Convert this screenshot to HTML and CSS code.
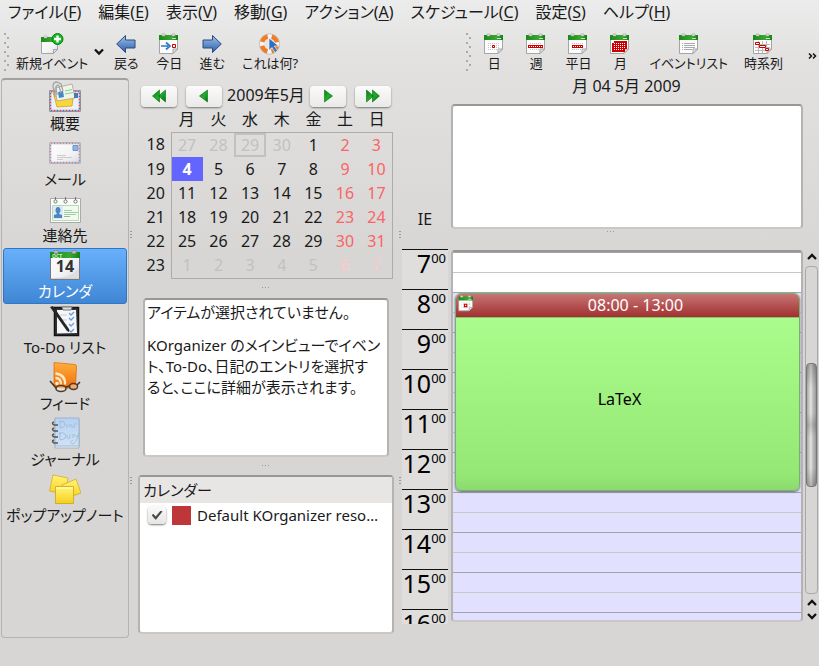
FILE: index.html
```html
<!DOCTYPE html>
<html lang="ja">
<head>
<meta charset="utf-8">
<title>Kontact</title>
<link rel="stylesheet" href="styles.css">
</head>
<body>
<svg class="defs" aria-hidden="true">
  <defs>
    <linearGradient id="green" x1="0" x2="1"><stop offset="0" stop-color="#178a17"/><stop offset=".65" stop-color="#3aa832"/><stop offset="1" stop-color="#128212"/></linearGradient>
    <linearGradient id="blue" x1="0" y1="0" x2="0" y2="1"><stop offset="0" stop-color="#9dc3ec"/><stop offset="1" stop-color="#2c5ea8"/></linearGradient>
    <linearGradient id="arrowgreen" x1="0" y1="0" x2="1" y2="1"><stop offset="0" stop-color="#0a7d14"/><stop offset=".5" stop-color="#1fb02a"/><stop offset="1" stop-color="#067010"/></linearGradient>
    <linearGradient id="orange" x1="0" y1="0" x2="0" y2="1"><stop offset="0" stop-color="#ffae3d"/><stop offset="1" stop-color="#ef6d08"/></linearGradient>
    <linearGradient id="paper" x1="0" y1="0" x2="1" y2="1"><stop offset="0" stop-color="#fff"/><stop offset=".6" stop-color="#f3f3f5"/><stop offset="1" stop-color="#d8dbe2"/></linearGradient>
    <linearGradient id="note" x1="0" y1="0" x2="0" y2="1"><stop offset="0" stop-color="#fff078"/><stop offset=".3" stop-color="#ffea5a"/><stop offset="1" stop-color="#f5cf20"/></linearGradient>
    <linearGradient id="book" x1="0" y1="0" x2="0" y2="1"><stop offset="0" stop-color="#b5d2f2"/><stop offset="1" stop-color="#cfe2f6"/></linearGradient>
    <pattern id="dots" width="2" height="2" patternUnits="userSpaceOnUse"><rect width="1" height="1" fill="#c4c4c4"/></pattern>
    <pattern id="whitedots" width="2" height="2" patternUnits="userSpaceOnUse"><rect width="1" height="1" fill="#fff"/></pattern>
    <symbol id="cal" viewBox="0 0 20 22">
      <path d="M.5 4.500V20.500H14L18.500 16V4.500z" fill="#fcfcfc" stroke="#a5a5a5"/>
      <path d="M14 20.500v-4.500h4.500z" fill="#e4e4e4" stroke="#a5a5a5"/>
      <path d="M0 2h19v5H0z" fill="url(#green)"/><path d="M13 5h4v1h-4z" fill="#c4e8bd"/>
      <path d="M3 1h3v2H3zM13 1h3v2h-3z" fill="#eee" stroke="#999" stroke-width=".6"/>
    </symbol>
  </defs>
</svg>

<nav class="menubar">
  <button>ファイル(<u>F</u>)</button>
  <button>編集(<u>E</u>)</button>
  <button>表示(<u>V</u>)</button>
  <button>移動(<u>G</u>)</button>
  <button>アクション(<u>A</u>)</button>
  <button>スケジュール(<u>C</u>)</button>
  <button>設定(<u>S</u>)</button>
  <button>ヘルプ(<u>H</u>)</button>
</nav>

<div class="toolbars">
  <div class="toolbar">
    <span class="handle"></span>
    <button class="tool"><svg viewBox="0 0 24 22" width="24" height="22"><path d="M1.500 6.500v14h12l4-4v-10z" fill="url(#paper)" stroke="#a5a5a5"/><path d="M13.500 20.500v-4h4z" fill="#ddd" stroke="#a5a5a5"/><path d="M1 4h17v5H1z" fill="url(#green)"/><path d="M4 3h3v2H4z" fill="#eee" stroke="#999" stroke-width=".5"/><circle cx="17.500" cy="6" r="5.500" fill="#18b524" stroke="#078311"/><path d="M17.500 2.500v7M14 6h7" stroke="#fff" stroke-width="2.400"/></svg><span>新規イベント</span></button>
    <button class="drop" aria-label="新規"><svg viewBox="0 0 10 8" width="10" height="8"><path d="M1 1.500l4 4 4-4" fill="none" stroke="#111" stroke-width="2.300"/></svg></button>
    <button class="tool"><svg viewBox="0 0 20 22" width="20" height="22"><path d="M.7 11L9.500 2.500v4.500h9.500v8H9.500v4.500z" fill="url(#blue)" stroke="#2a4a80"/></svg><span>戻る</span></button>
    <button class="tool"><svg viewBox="0 0 20 22" width="20" height="22"><use href="#cal"/><path d="M2 13h7M7 9.500l4 3.500-4 3.500" fill="none" stroke="#2f75c8" stroke-width="1.700"/><path d="M13.500 11.500h3v3h-3z" fill="#fff" stroke="#c00"/></svg><span>今日</span></button>
    <button class="tool"><svg viewBox="0 0 20 22" width="20" height="22"><path d="M19.300 11L10.500 2.500v4.500H1v8h9.500v4.500z" fill="url(#blue)" stroke="#2a4a80"/></svg><span>進む</span></button>
    <button class="tool"><svg viewBox="0 0 24 22" width="24" height="22"><circle cx="11.500" cy="11" r="7.500" fill="none" stroke="#f8f4f0" stroke-width="5"/><circle cx="11.500" cy="11" r="7.700" fill="none" stroke="#ef7d27" stroke-width="4.500" stroke-dasharray="8 4.100" stroke-dashoffset="-2"/><circle cx="11.500" cy="11" r="10.200" fill="none" stroke="#b9aaa0" stroke-width=".6"/><path d="M11 5v12.500l3-3 3 5 2.500-1.700-3.200-4.800h4.200z" fill="#2d70c2" stroke="#fff" stroke-width=".6"/></svg><span>これは何?</span></button>
  </div>
  <div class="toolbar views">
    <span class="handle"></span>
    <button class="tool"><svg viewBox="0 0 20 22" width="20" height="22"><use href="#cal"/><path d="M4 9h12v9H4z" fill="url(#dots)"/><path d="M8.500 12.500h2v2h-2z" fill="#fff" stroke="#c80000"/></svg><span>日</span></button>
    <button class="tool"><svg viewBox="0 0 20 22" width="20" height="22"><use href="#cal"/><path d="M4 9h12v9H4z" fill="url(#dots)"/><path d="M2 12h15v3H2z" fill="#d00000"/><path d="M3 13h1v1H3zM5 13h1v1H5zM7 13h1v1H7zM9 13h1v1H9zM11 13h1v1h-1zM13 13h1v1h-1zM15 13h1v1h-1z" fill="#fff"/></svg><span>週</span></button>
    <button class="tool"><svg viewBox="0 0 20 22" width="20" height="22"><use href="#cal"/><path d="M4 9h12v9H4z" fill="url(#dots)"/><path d="M4 12h11v3H4z" fill="#d00000"/><path d="M5 13h1v1H5zM7 13h1v1H7zM9 13h1v1H9zM11 13h1v1h-1zM13 13h1v1h-1z" fill="#fff"/></svg><span>平日</span></button>
    <button class="tool"><svg viewBox="0 0 20 22" width="20" height="22"><use href="#cal"/><path d="M4 8h13v8h-2v3H2v-9h2z" fill="#d00000"/><path d="M4 10h12v6H4z" fill="url(#whitedots)"/><path d="M4 16h10v2H4z" fill="url(#whitedots)"/></svg><span>月</span></button>
    <button class="tool"><svg viewBox="0 0 20 22" width="20" height="22"><use href="#cal"/><path d="M3 10.500h1m1 0h11M3 12.500h1m1 0h11M3 14.500h1m1 0h11M3 16.500h1m1 0h8" stroke="#aaa"/></svg><span>イベントリスト</span></button>
    <button class="tool"><svg viewBox="0 0 20 22" width="20" height="22"><use href="#cal"/><path d="M2 11.500h15M2 14.500h15M2 17.500h11M5.500 8v12M9.500 8v12M13.500 8v9" stroke="#bbb"/><path d="M2.500 9.500h4v2h-4zM6.500 12.500h6v2h-6zM12.500 15.500h3v2h-3z" fill="#fff" stroke="#c80000"/></svg><span>時系列</span></button>
    <button class="more" aria-label="その他"><svg viewBox="0 0 9 6" width="9" height="6"><path d="M1 .5L3.500 3 1 5.500M5 .5L7.500 3 5 5.500" fill="none" stroke="#111" stroke-width="1.500"/></svg></button>
  </div>
</div>

<main class="main">
  <aside class="sidebar">
    <button class="place"><svg viewBox="0 0 32 32" width="32" height="32"><path d="M.5 9.500h31v21H.5z" fill="#eef0f7" stroke="#999"/><path d="M1.500 10.500h29v19h-29z" fill="none" stroke="#d44" stroke-width="1.600" stroke-dasharray="2 4"/><path d="M1.500 10.500h29v19h-29z" fill="none" stroke="#37c" stroke-width="1.600" stroke-dasharray="2 4" stroke-dashoffset="3"/><path d="M4 11l4 15 15-1 1-7z" fill="#fbd63b" stroke="#c69a1c" stroke-width=".7"/><path d="M6 7l17-4 3 14-18 3z" fill="#eef6ea" stroke="#9b9b8b" stroke-width=".7"/><path d="M9 11l5-1 1 6-5 1z" fill="#4b83c4"/><path d="M16 10l7-1.500M16 13l8-1.500" stroke="#8fc69c"/><path d="M25 12h4v5h-4z" fill="#4778b8"/><path d="M6 16L4 5q0-4 4-4l4 2 2 7M8 14L7 6q1-3 3-1l2 7" fill="none" stroke="#a5a5a5" stroke-width="1.300"/></svg><span>概要</span></button>
    <button class="place"><svg viewBox="0 0 32 32" width="32" height="32"><path d="M.5 5.500h31v21H.5z" fill="url(#paper)" stroke="#bbb"/><path d="M1.500 6.500h29v19h-29z" fill="none" stroke="#e57b7b" stroke-width="1.500" stroke-dasharray="2 4"/><path d="M1.500 6.500h29v19h-29z" fill="none" stroke="#6d9bd0" stroke-width="1.500" stroke-dasharray="2 4" stroke-dashoffset="3"/><path d="M24 8.500h5v5h-5z" fill="#8fb3dd" stroke="#6a97cf"/><path d="M8 18.500h9M8 20.500h15M8 22.500h6" stroke="#ccc"/></svg><span>メール</span></button>
    <button class="place"><svg viewBox="0 0 32 32" width="32" height="32"><path d="M1.500 5.500h30v24h-30z" fill="#fbfdfb" stroke="#aaa"/><path d="M3.500 12.500h26v15h-26z" fill="#f2f9f1" stroke="#b4dcae"/><path d="M4 13h10v13H4z" fill="#dbe9f5"/><path d="M5 25v-3l3-1-1.500-3q0-4 2.500-4t2.500 4L10 21l3 1v3z" fill="#4b85c4"/><path d="M15 17.500h8M15 19.500h14M15 21.500h12" stroke="#9bd2a2"/><path d="M15 23.500h6" stroke="#aaa"/><g fill="#fff" stroke="#777"><circle cx="6.500" cy="8.500" r="1.600"/><circle cx="16.500" cy="8.500" r="1.600"/><circle cx="26.500" cy="8.500" r="1.600"/><path d="M6.500 7V4M16.500 7V4M26.500 7V4"/></g></svg><span>連絡先</span></button>
    <button class="place selected"><svg viewBox="0 0 32 32" width="32" height="32"><path d="M1.500 3.500h29v27h-29z" fill="#cfd1d2" stroke="#778"/><path d="M2 4h28v25H2z" fill="url(#paper)"/><path d="M2 29q18 1 28-9v9z" fill="#dedede"/><path d="M1 3h30v6H1z" fill="url(#green)"/><path d="M5 1.500h4v3H5zM23 1.500h4v3h-4z" fill="#bbb" stroke="#888" stroke-width=".7"/><text x="3" y="8.500" class="oct">OCT</text><text x="16" y="22.500" text-anchor="middle" class="daynum">14</text></svg><span>カレンダ</span></button>
    <button class="place"><svg viewBox="0 0 32 32" width="32" height="32"><path d="M5.500 2.500h24v28h-24z" fill="#333" stroke="#111" stroke-width="1.500"/><path d="M8 5h19l1 23-20 .500z" fill="#f4f6fa"/><path d="M13 2h10l-1 3h-8z" fill="#ddd" stroke="#777"/><g fill="none" stroke="#6a9de0" stroke-width="1.300"><path d="M20 8l2 2 3-3M20 13l2 2 3-3M20 19l2 2 3-3M20 25l2 2 3-3"/></g><path d="M11 10h7M13 15h5M15 20h3" stroke="#ccc"/><path d="M1 2l3-1 16 23v3l-2-1z" fill="#252525"/></svg><span>To-Do リスト</span></button>
    <button class="place"><svg viewBox="0 0 32 32" width="32" height="32"><path d="M5 1.500l21 2q1.500 0 1.500 2l-1 22-20-1Q5 26 5 24z" fill="url(#orange)" stroke="#d9680c" stroke-width=".7"/><g fill="none" stroke="#ffe8c8" stroke-width="2.300"><path d="M6.500 12.500q10 1 9.500 11M6.500 17q5.500 0 5.500 6.500"/></g><circle cx="8" cy="22.500" r="1.800" fill="#ffe8c8"/><g fill="#ffffff66" stroke="#4d3924" stroke-width="1.600"><ellipse cx="12" cy="27.500" rx="5" ry="3"/><ellipse cx="24.500" cy="25.500" rx="4" ry="3"/><path d="M17 26l3.500-1M7 27l-6-7M28 24l3-3" fill="none"/></g></svg><span>フィード</span></button>
    <button class="place"><svg viewBox="0 0 32 32" width="32" height="32"><path d="M6 2h24v29H6z" fill="#e4eef7" stroke="#9aa9b8" stroke-width=".8"/><path d="M6 1h24v28H6z" fill="url(#book)" stroke="#8ca6c3" stroke-width=".7"/><g fill="none" stroke="#9fb6d0" stroke-width=".8"><path d="M11 4v7q7-1 4-6-3-2-5 0M18 7v4M20 10q0-3 3-2v3M25 11V8q1-2 3-1M11 15v8q8-1 5-6-3-3-6 0M18 18q0 5 3 3v-4M24 21v-4M25 17q3 6 5-1-2 9-6 11-5-1 0-4"/></g><g fill="none" stroke="#555" stroke-width="1.500"><path d="M9 8H5q-3-2 0-3M9 14H5q-3-2 0-3M9 20H5q-3-2 0-3M9 26H5q-3-2 0-3"/></g></svg><span>ジャーナル</span></button>
    <button class="place"><svg viewBox="0 0 32 32" width="32" height="32"><path d="M4 2l15 3-3 16L.5 18z" fill="url(#note)" stroke="#cfa91d" stroke-width=".7"/><path d="M27 6l5 14-14 5-5-13z" fill="url(#note)" stroke="#cfa91d" stroke-width=".7"/><path d="M6.500 13.500h18v17h-18z" fill="url(#note)" stroke="#c9a31c" stroke-width=".8"/><path d="M7 14h17v2H7z" fill="#fff6a8"/></svg><span>ポップアップノート</span></button>
  </aside>
  <div class="grip-v"><i></i><i></i></div>

  <section class="middle">
    <div class="navigator">
      <div class="nav-row">
        <button aria-label="前年"><svg viewBox="0 0 14 14" width="14" height="14"><path d="M7.500 1v12L.5 7zM13.500 1v12L6.500 7z" fill="url(#arrowgreen)" stroke="#0b6b14" stroke-width=".6"/></svg></button>
        <button aria-label="前月"><svg viewBox="0 0 14 14" width="14" height="14"><path d="M10.500 1v12L2.500 7z" fill="url(#arrowgreen)" stroke="#0b6b14" stroke-width=".6"/></svg></button>
        <span class="month">2009年5月</span>
        <button aria-label="翌月"><svg viewBox="0 0 14 14" width="14" height="14"><path d="M3.500 1v12l8-6z" fill="url(#arrowgreen)" stroke="#0b6b14" stroke-width=".6"/></svg></button>
        <button aria-label="翌年"><svg viewBox="0 0 14 14" width="14" height="14"><path d="M.5 1v12l7-6zM6.500 1v12l7-6z" fill="url(#arrowgreen)" stroke="#0b6b14" stroke-width=".6"/></svg></button>
      </div>
      <table class="cal">
        <thead><tr><td class="wk"></td><th>月</th><th>火</th><th>水</th><th>木</th><th>金</th><th>土</th><th>日</th></tr></thead>
        <tbody>
          <tr><th class="wk">18</th><td class="off">27</td><td class="off">28</td><td class="off today">29</td><td class="off">30</td><td>1</td><td class="hol">2</td><td class="hol">3</td></tr>
          <tr><th class="wk">19</th><td class="picked">4</td><td>5</td><td>6</td><td>7</td><td>8</td><td class="hol">9</td><td class="hol">10</td></tr>
          <tr><th class="wk">20</th><td>11</td><td>12</td><td>13</td><td>14</td><td>15</td><td class="hol">16</td><td class="hol">17</td></tr>
          <tr><th class="wk">21</th><td>18</td><td>19</td><td>20</td><td>21</td><td>22</td><td class="hol">23</td><td class="hol">24</td></tr>
          <tr><th class="wk">22</th><td>25</td><td>26</td><td>27</td><td>28</td><td>29</td><td class="hol">30</td><td class="hol">31</td></tr>
          <tr><th class="wk">23</th><td class="off">1</td><td class="off">2</td><td class="off">3</td><td class="off">4</td><td class="off">5</td><td class="offhol">6</td><td class="offhol">7</td></tr>
        </tbody>
      </table>
    </div>
    <div class="grip-h"><i></i></div>
    <div class="details frame">
      <p>アイテムが選択されていません。</p>
      <p>KOrganizer のメインビューでイベント、To-Do、日記のエントリを選択す<br>ると、ここに詳細が表示されます。</p>
    </div>
    <div class="grip-h"><i></i></div>
    <div class="resources frame">
      <h2>カレンダー</h2>
      <label><input type="checkbox" checked><span class="swatch"></span><span class="name">Default KOrganizer reso…</span></label>
    </div>
  </section>
  <div class="grip-v narrow"><i></i><i></i></div>

  <section class="day">
    <h1>月 04 5月 2009</h1>
    <div class="allday"><span class="zone">IE</span><div class="frame"></div></div>
    <div class="grip-h"><i></i></div>
    <div class="agenda">
      <ol class="hours">
        <li>7<sup>00</sup></li><li>8<sup>00</sup></li><li>9<sup>00</sup></li><li>10<sup>00</sup></li><li>11<sup>00</sup></li><li>12<sup>00</sup></li><li>13<sup>00</sup></li><li>14<sup>00</sup></li><li>15<sup>00</sup></li><li>16<sup>00</sup></li>
      </ol>
      <div class="grid frame">
        <article class="event">
          <header><svg viewBox="0 0 20 22" width="16" height="17"><use href="#cal"/><path d="M4 9h12v9H4z" fill="url(#dots)"/><path d="M8 12h3v3H8z" fill="#fff" stroke="#d00000" stroke-width="1.500"/></svg><span>08:00 - 13:00</span></header>
          <div class="title">LaTeX</div>
        </article>
      </div>
      <div class="scrollbar">
        <button aria-label="上へ"><svg viewBox="0 0 10 8" width="10" height="8"><path d="M1 6l4-4 4 4" fill="none" stroke="#111" stroke-width="2.300"/></svg></button>
        <div class="track"><div class="thumb"></div></div>
        <button aria-label="上へ"><svg viewBox="0 0 10 8" width="10" height="8"><path d="M1 6l4-4 4 4" fill="none" stroke="#111" stroke-width="2.300"/></svg></button>
        <button aria-label="下へ"><svg viewBox="0 0 10 8" width="10" height="8"><path d="M1 2l4 4 4-4" fill="none" stroke="#111" stroke-width="2.300"/></svg></button>
      </div>
    </div>
  </section>
</main>
</body>
</html>
```
FILE: styles.css
```css
* { box-sizing: border-box; }

body {
  margin: 0;
  height: 100vh;
  display: flex;
  flex-direction: column;
  padding-bottom: 28px;
  overflow: hidden;
  background: linear-gradient(#ececec 0, #e2e1e0 60px, #d7d6d4 260px) #d7d6d4;
  color: #1a1a1a;
  font: 15px/20px "Noto Sans", "Noto Sans CJK JP", sans-serif;
  font-feature-settings: "palt";
}

button {
  font: inherit;
  color: inherit;
  border: 0;
  padding: 0;
  background: none;
  font-feature-settings: inherit;
}

svg { display: block; flex: none; }
.defs { position: absolute; width: 0; height: 0; }

.menubar {
  display: flex;
  gap: 17px;
  height: 26px;
  padding: 0 8px 2px;
  align-items: center;
  font-size: 16px;
  white-space: nowrap;
}
.menubar u { text-underline-offset: 2px; }

.toolbars {
  display: flex;
  justify-content: space-between;
  height: 52px;
  padding: 7px 2px 0 4px;
}
.toolbar {
  display: flex;
  gap: 17px;
  font-size: 13px;
  line-height: 16px;
  white-space: nowrap;
}
.views { gap: 16px; }
.handle {
  width: 6px;
  height: 38px;
  margin-right: -11px;
  background:
    radial-gradient(circle at 1px 1px, #aaa 1px, transparent 1px) 0 0 / 3px 9px repeat-y,
    radial-gradient(circle at 1px 1px, #aaa 1px, transparent 1px) 3px 4px / 3px 9px repeat-y;
}
.views .handle { margin-right: -7px; }
.tool {
  display: flex;
  flex-direction: column;
  align-items: center;
  align-self: flex-start;
  min-width: 26px;
}
.drop { margin: 0 -8px 8px -11px; }
.more { margin-left: 9px; }

.main {
  flex: 1;
  min-height: 0;
  display: flex;
}

.frame {
  background: #fff;
  border: 2px solid #b4b3b1;
  border-top-color: #989795;
  border-bottom-color: #c9c8c6;
  border-radius: 4px;
}

.sidebar {
  width: 128px;
  margin-left: 1px;
  padding: 0 1px;
  border: 1px solid #b4b3b1;
  border-top: 2px solid #a2a19f;
  border-radius: 4px;
}
.place {
  width: 100%;
  height: 56px;
  display: flex;
  flex-direction: column;
  align-items: center;
  border: 1px solid transparent;
  border-radius: 3px;
  white-space: nowrap;
}
.place span { line-height: 20px; }
.selected {
  color: #fff;
  background: linear-gradient(#68b0fb, #3f87d4);
  border-color: #2f76c4;
}
.oct { font: bold 5px "Noto Sans", sans-serif; fill: #d5f5cd; }
.daynum { font: bold 16px "Noto Sans", sans-serif; fill: #333; }

.grip-v {
  width: 9px;
  flex: none;
  display: flex;
  flex-direction: column;
  justify-content: space-around;
  align-items: flex-start;
  padding: 34px 1px;
}
.grip-v i {
  width: 2px;
  height: 8px;
  background: repeating-linear-gradient(#999 0 1px, transparent 1px 3px);
}
.narrow { width: 8px; align-items: flex-end; }
.grip-h {
  height: 18px;
  flex: none;
  display: flex;
  justify-content: center;
  padding-top: 8px;
}
.grip-h i {
  width: 8px;
  height: 1px;
  background: repeating-linear-gradient(90deg, #999 0 1px, transparent 1px 3px);
}

.middle {
  width: 256px;
  flex: none;
  display: flex;
  flex-direction: column;
  padding-bottom: 4px;
}
.navigator { padding: 7px 1px 0 3px; }
.nav-row {
  display: flex;
  justify-content: space-between;
  align-items: center;
  padding: 0 2px 0 0;
  height: 22px;
}
.nav-row button {
  width: 36px;
  height: 21px;
  display: grid;
  place-items: center;
  background: linear-gradient(#fbfbfb, #e9e9e8);
  border-radius: 4px;
  box-shadow: 0 1px 2px #777;
}
.nav-row button:nth-of-type(2) { margin-right: -4px; }
.nav-row button:nth-of-type(3) { margin-left: -4px; }
.month { font-size: 16px; line-height: 18px; padding-bottom: 2px; }

.cal {
  width: 100%;
  table-layout: fixed;
  border-collapse: collapse;
  text-align: center;
  font-size: 16px;
}
.cal th { font-weight: normal; }
.cal th, .cal td { padding: 0; height: 24px; vertical-align: top; }
.cal thead th { height: 25px; line-height: 24px; }
.cal .wk { width: 30px; }
.cal tbody { line-height: 24px; }
.cal tbody tr:last-child td { height: 26px; }
.cal tbody td:nth-child(2) { border-left: 1px solid #adacaa; }
.cal tbody td:last-child { border-right: 1px solid #adacaa; }
.cal tbody tr:first-child td { border-top: 1px solid #adacaa; }
.cal tbody tr:last-child td { border-bottom: 1px solid #adacaa; }
.cal .off { color: #c2c1bf; }
.cal .hol { color: #fa6464; }
.cal .offhol { color: #fccaca; }
.cal .today { box-shadow: inset 0 0 0 2px #c2c1bf; }
.cal .picked { background: #6464ff; color: #fff; font-weight: bold; }

.details {
  margin: 1px 5px 0;
  height: 159px;
  flex: none;
  padding: 2px;
  overflow: hidden;
  line-height: 21px;
  line-break: anywhere;
}
.details p { margin: 0 0 12px; }

.resources { flex: 1; min-height: 0; overflow: hidden; }
.resources h2 {
  margin: 0;
  padding: 0 3px;
  font: inherit;
  line-height: 26px;
  background: #e7e6e5;
}
.resources label {
  display: flex;
  align-items: center;
  gap: 6px;
  padding: 2px 8px;
}
.resources input {
  appearance: none;
  flex: none;
  width: 18px;
  height: 18px;
  margin: 0;
  border-radius: 4px;
  background: linear-gradient(#fafafa, #e6e6e5);
  box-shadow: 0 1px 2px #777;
  display: grid;
  place-items: center;
}
.resources input:checked::before {
  content: "";
  width: 11px;
  height: 9px;
  background: #4a4844;
  clip-path: polygon(0 50%, 18% 38%, 38% 66%, 84% 0, 100% 12%, 42% 100%, 34% 100%);
}
.swatch { width: 19px; height: 19px; flex: none; background: #bf3638; }
.name { white-space: nowrap; }

.day {
  flex: 1;
  min-width: 0;
  display: flex;
  flex-direction: column;
  padding-bottom: 14px;
}
.day h1 {
  margin: 0 17px 0 49px;
  height: 26px;
  font: inherit;
  font-size: 16px;
  line-height: 16px;
  text-align: center;
}
.allday {
  display: grid;
  grid-template-columns: 46px 1fr;
  column-gap: 3px;
  height: 125px;
  margin-right: 16px;
}
.zone { align-self: end; text-align: center; font-size: 16px; }
.day .grip-h { height: 20px; padding: 2px 0 0; }

.agenda {
  flex: 1;
  min-height: 0;
  display: grid;
  grid-template-columns: 46px 1fr 16px;
  grid-template-rows: 100%;
}
.hours {
  margin: 0;
  padding: 0;
  list-style: none;
  overflow: hidden;
  background: #dfdedd;
}
.hours li {
  height: 40px;
  border-top: 1px solid #111;
  padding-right: 2px;
  color: #000;
  font-size: 25px;
  line-height: 26px;
  display: flex;
  justify-content: flex-end;
}
.hours sup { font-size: 13px; line-height: 16px; }

.grid {
  position: relative;
  margin: 1px 0 2px 3px;
  overflow: hidden;
  background:
    linear-gradient(transparent 20px, #c8c7c5 20px 21px, transparent 21px) 0 0 / 100% 40px,
    linear-gradient(#a3a3a7 1px, transparent 1px) 0 0 / 100% 40px,
    linear-gradient(#fff 40px, #e1e0ff 40px);
}
.event {
  position: absolute;
  top: 41px;
  left: 2px;
  right: 1px;
  height: 198px;
  display: flex;
  flex-direction: column;
  overflow: hidden;
  border: 1px solid #7dae70;
  border-radius: 6px;
  background: linear-gradient(#adff8f, #95e875 92%, #8bda70);
  box-shadow: 0 1px 2px #667;
  font-size: 16px;
}
.event header {
  display: flex;
  height: 24px;
  padding: 0 2px;
  background: linear-gradient(#c77474, #a23030);
  border-bottom: 1px solid #83c66d;
  color: #fff;
  line-height: 23px;
}
.event header svg { margin-top: 1px; }
.event header span { flex: 1; text-align: center; }
.title { flex: 1; display: grid; place-items: center; padding: 0 16px 10px 0; color: #000; }

.scrollbar {
  display: flex;
  flex-direction: column;
  align-items: center;
  padding: 1px 1px 2px 2px;
}
.scrollbar button { height: 13px; display: grid; place-items: center; }
.track {
  flex: 1;
  width: 100%;
  margin: 3px 0 2px;
  border: 1px solid #aaa9a7;
  border-radius: 4px;
  display: flex;
  flex-direction: column;
  justify-content: flex-end;
  padding-bottom: 106px;
}
.thumb {
  height: 124px;
  border: 1px solid #777;
  border-radius: 4px;
  background: linear-gradient(#0003, transparent 20% 40%, #0002 50%, transparent 60% 85%, #0003), linear-gradient(90deg, #aaa, #e5e5e4 45%, #c5c5c4 60%, #999);
}
```
